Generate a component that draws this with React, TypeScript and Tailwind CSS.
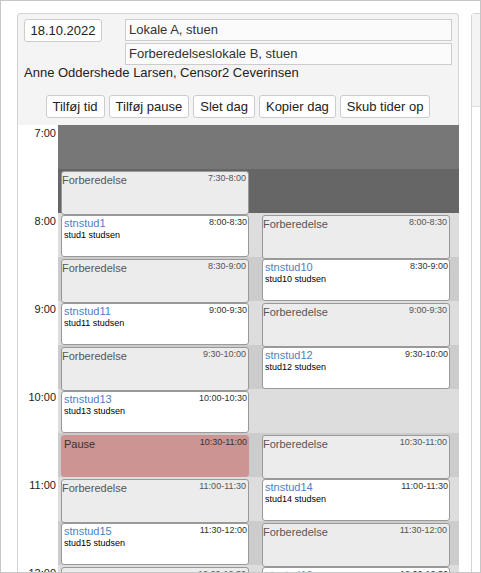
import React from 'react';

type Ev = { slot: number; kind: 'prep' | 'stud' | 'pause'; time: string; name?: string; sub?: string };

// one class per grid row, written out so tailwind picks them up
const rowStart = [
    'row-start-1', 'row-start-2', 'row-start-3', 'row-start-4', 'row-start-5', 'row-start-6',
    'row-start-7', 'row-start-8', 'row-start-9', 'row-start-10', 'row-start-11',
];

const stripeColor = (i: number) => {
    if (i === 0) return 'bg-[#777777]';
    if (i === 1) return 'bg-[#666666]';
    return i % 2 === 0 ? 'bg-[#dddddd]' : 'bg-[#cccccc]';
};

const roomA: Ev[] = [
    { slot: 1, kind: 'prep', time: '7:30-8:00' },
    { slot: 2, kind: 'stud', time: '8:00-8:30', name: 'stnstud1', sub: 'stud1 studsen' },
    { slot: 3, kind: 'prep', time: '8:30-9:00' },
    { slot: 4, kind: 'stud', time: '9:00-9:30', name: 'stnstud11', sub: 'stud11 studsen' },
    { slot: 5, kind: 'prep', time: '9:30-10:00' },
    { slot: 6, kind: 'stud', time: '10:00-10:30', name: 'stnstud13', sub: 'stud13 studsen' },
    { slot: 7, kind: 'pause', time: '10:30-11:00' },
    { slot: 8, kind: 'prep', time: '11:00-11:30' },
    { slot: 9, kind: 'stud', time: '11:30-12:00', name: 'stnstud15', sub: 'stud15 studsen' },
    { slot: 10, kind: 'prep', time: '12:00-12:30' },
];

const roomB: Ev[] = [
    { slot: 2, kind: 'prep', time: '8:00-8:30' },
    { slot: 3, kind: 'stud', time: '8:30-9:00', name: 'stnstud10', sub: 'stud10 studsen' },
    { slot: 4, kind: 'prep', time: '9:00-9:30' },
    { slot: 5, kind: 'stud', time: '9:30-10:00', name: 'stnstud12', sub: 'stud12 studsen' },
    { slot: 7, kind: 'prep', time: '10:30-11:00' },
    { slot: 8, kind: 'stud', time: '11:00-11:30', name: 'stnstud14', sub: 'stud14 studsen' },
    { slot: 9, kind: 'prep', time: '11:30-12:00' },
    { slot: 10, kind: 'stud', time: '12:00-12:30', name: 'stnstud16', sub: 'stud16 studsen' },
];

const hours = ['7:00', '8:00', '9:00', '10:00', '11:00', '12:00'];

function EventBox({ ev, col }: { ev: Ev; col: 1 | 2 }) {
    const place = `${col === 1 ? 'col-start-1 ml-[3px]' : 'col-start-2 ml-[4px]'} ${rowStart[ev.slot]}`;

    if (ev.kind === 'stud') {
        return (
            <div className={`${place} self-start justify-self-start mt-[2px] w-[188px] h-[42px] rounded-[3px] border border-[#999999] bg-white pl-[2px] pr-[1px] pt-[1px]`}>
                <div className="flex items-start justify-between">
                    <span className="text-[11px] leading-[13px] text-[#4b7fc4]">{ev.name}</span>
                    <span className="text-[9px] leading-[11px] text-[#333333]">{ev.time}</span>
                </div>
                <div className="text-[9px] leading-[11px] text-black">{ev.sub}</div>
            </div>
        );
    }

    if (ev.kind === 'pause') {
        return (
            <div className={`${place} self-start justify-self-start mt-[2px] w-[188px] h-[42px] rounded-[3px] border border-[#cd9494] bg-[#cd9494] pl-[2px] pr-[1px] pt-[1px]`}>
                <div className="flex items-start justify-between">
                    <span className="mt-[1px] text-[11px] leading-[13px] text-[#333333]">Pause</span>
                    <span className="text-[9px] leading-[11px] text-[#333333]">{ev.time}</span>
                </div>
            </div>
        );
    }

    return (
        <div className={`${place} self-start justify-self-start mt-[2px] w-[188px] h-[44px] rounded-[3px] border border-[#999999] bg-[#ececec] pl-0 pr-[2px] pt-[1px]`}>
            <div className="flex items-start justify-between">
                <span className="mt-[1px] text-[11px] leading-[13px] text-[#555555]">Forberedelse</span>
                <span className="text-[9px] leading-[11px] text-[#555555]">{ev.time}</span>
            </div>
        </div>
    );
}

export default function App() {
    const buttons = ['Tilføj tid', 'Tilføj pause', 'Slet dag', 'Kopier dag', 'Skub tider op'];

    return (
        <div className="w-[481px] h-[573px] overflow-hidden border border-[#c6c6c6] bg-white font-[Liberation_Sans,Arial,sans-serif]">
            <div className="flex items-start pl-[16px] pt-[12px]">
                {/* day panel */}
                <div className="flex w-[442px] shrink-0 flex-col">
                    <div className="rounded-t-[4px] border border-b-0 border-[#d4d4d4] bg-[#f4f4f4] px-[5px] pt-[5px] pb-[7px]">
                        <div className="flex items-start pl-[1px]">
                            <div className="flex h-[23px] w-[78px] items-center justify-center rounded-[3px] border border-[#cccccc] bg-white text-[13px] text-[#222222]">
                                18.10.2022
                            </div>
                            <div className="ml-[23px] flex flex-col gap-[2px]">
                                <div className="flex h-[22px] w-[327px] items-center border border-[#cccccc] bg-[#fbfbfb] pl-[3px] text-[13px] text-[#333333]">
                                    Lokale A, stuen
                                </div>
                                <div className="flex h-[22px] w-[327px] items-center border border-[#cccccc] bg-[#fbfbfb] pl-[3px] text-[13px] text-[#333333]">
                                    Forberedelseslokale B, stuen
                                </div>
                            </div>
                        </div>
                        <div className="pl-[1px] text-[13px] leading-[15px] text-[#222222]">
                            Anne Oddershede Larsen, Censor2 Ceverinsen
                        </div>
                        <div className="mt-[15px] flex justify-center gap-[4px]">
                            {buttons.map((b) => (
                                <button
                                    key={b}
                                    className="h-[23px] rounded-[3px] border border-[#cccccc] bg-white px-[6px] text-[13px] leading-[21px] text-[#222222]"
                                >
                                    {b}
                                </button>
                            ))}
                        </div>
                    </div>

                    {/* calendar */}
                    <div className="flex border-l border-[#d4d4d4]">
                        <div className="w-[40px] shrink-0 bg-white">
                            {hours.map((h) => (
                                <div key={h} className="h-[88px] pr-[2px] pt-[2px] text-right text-[11px] leading-[13px] text-[#222222]">
                                    {h}
                                </div>
                            ))}
                        </div>
                        <div className="grid w-[401px] shrink-0 grid-cols-[200px_201px] grid-rows-[repeat(11,44px)]">
                            {rowStart.map((r, i) => (
                                <div key={r} className={`col-start-1 col-span-2 ${r} ${stripeColor(i)}`} />
                            ))}
                            {roomA.map((ev) => (
                                <EventBox key={'a' + ev.slot} ev={ev} col={1} />
                            ))}
                            {roomB.map((ev) => (
                                <EventBox key={'b' + ev.slot} ev={ev} col={2} />
                            ))}
                        </div>
                    </div>
                </div>

                {/* next day panel, mostly off screen */}
                <div className="ml-[12px] h-[600px] w-[200px] shrink-0 rounded-tl-[4px] border-l border-t border-[#d4d4d4]">
                    <div className="h-[93px] border-b border-[#dddddd] bg-[#f4f4f4]" />
                </div>
            </div>
        </div>
    );
}
